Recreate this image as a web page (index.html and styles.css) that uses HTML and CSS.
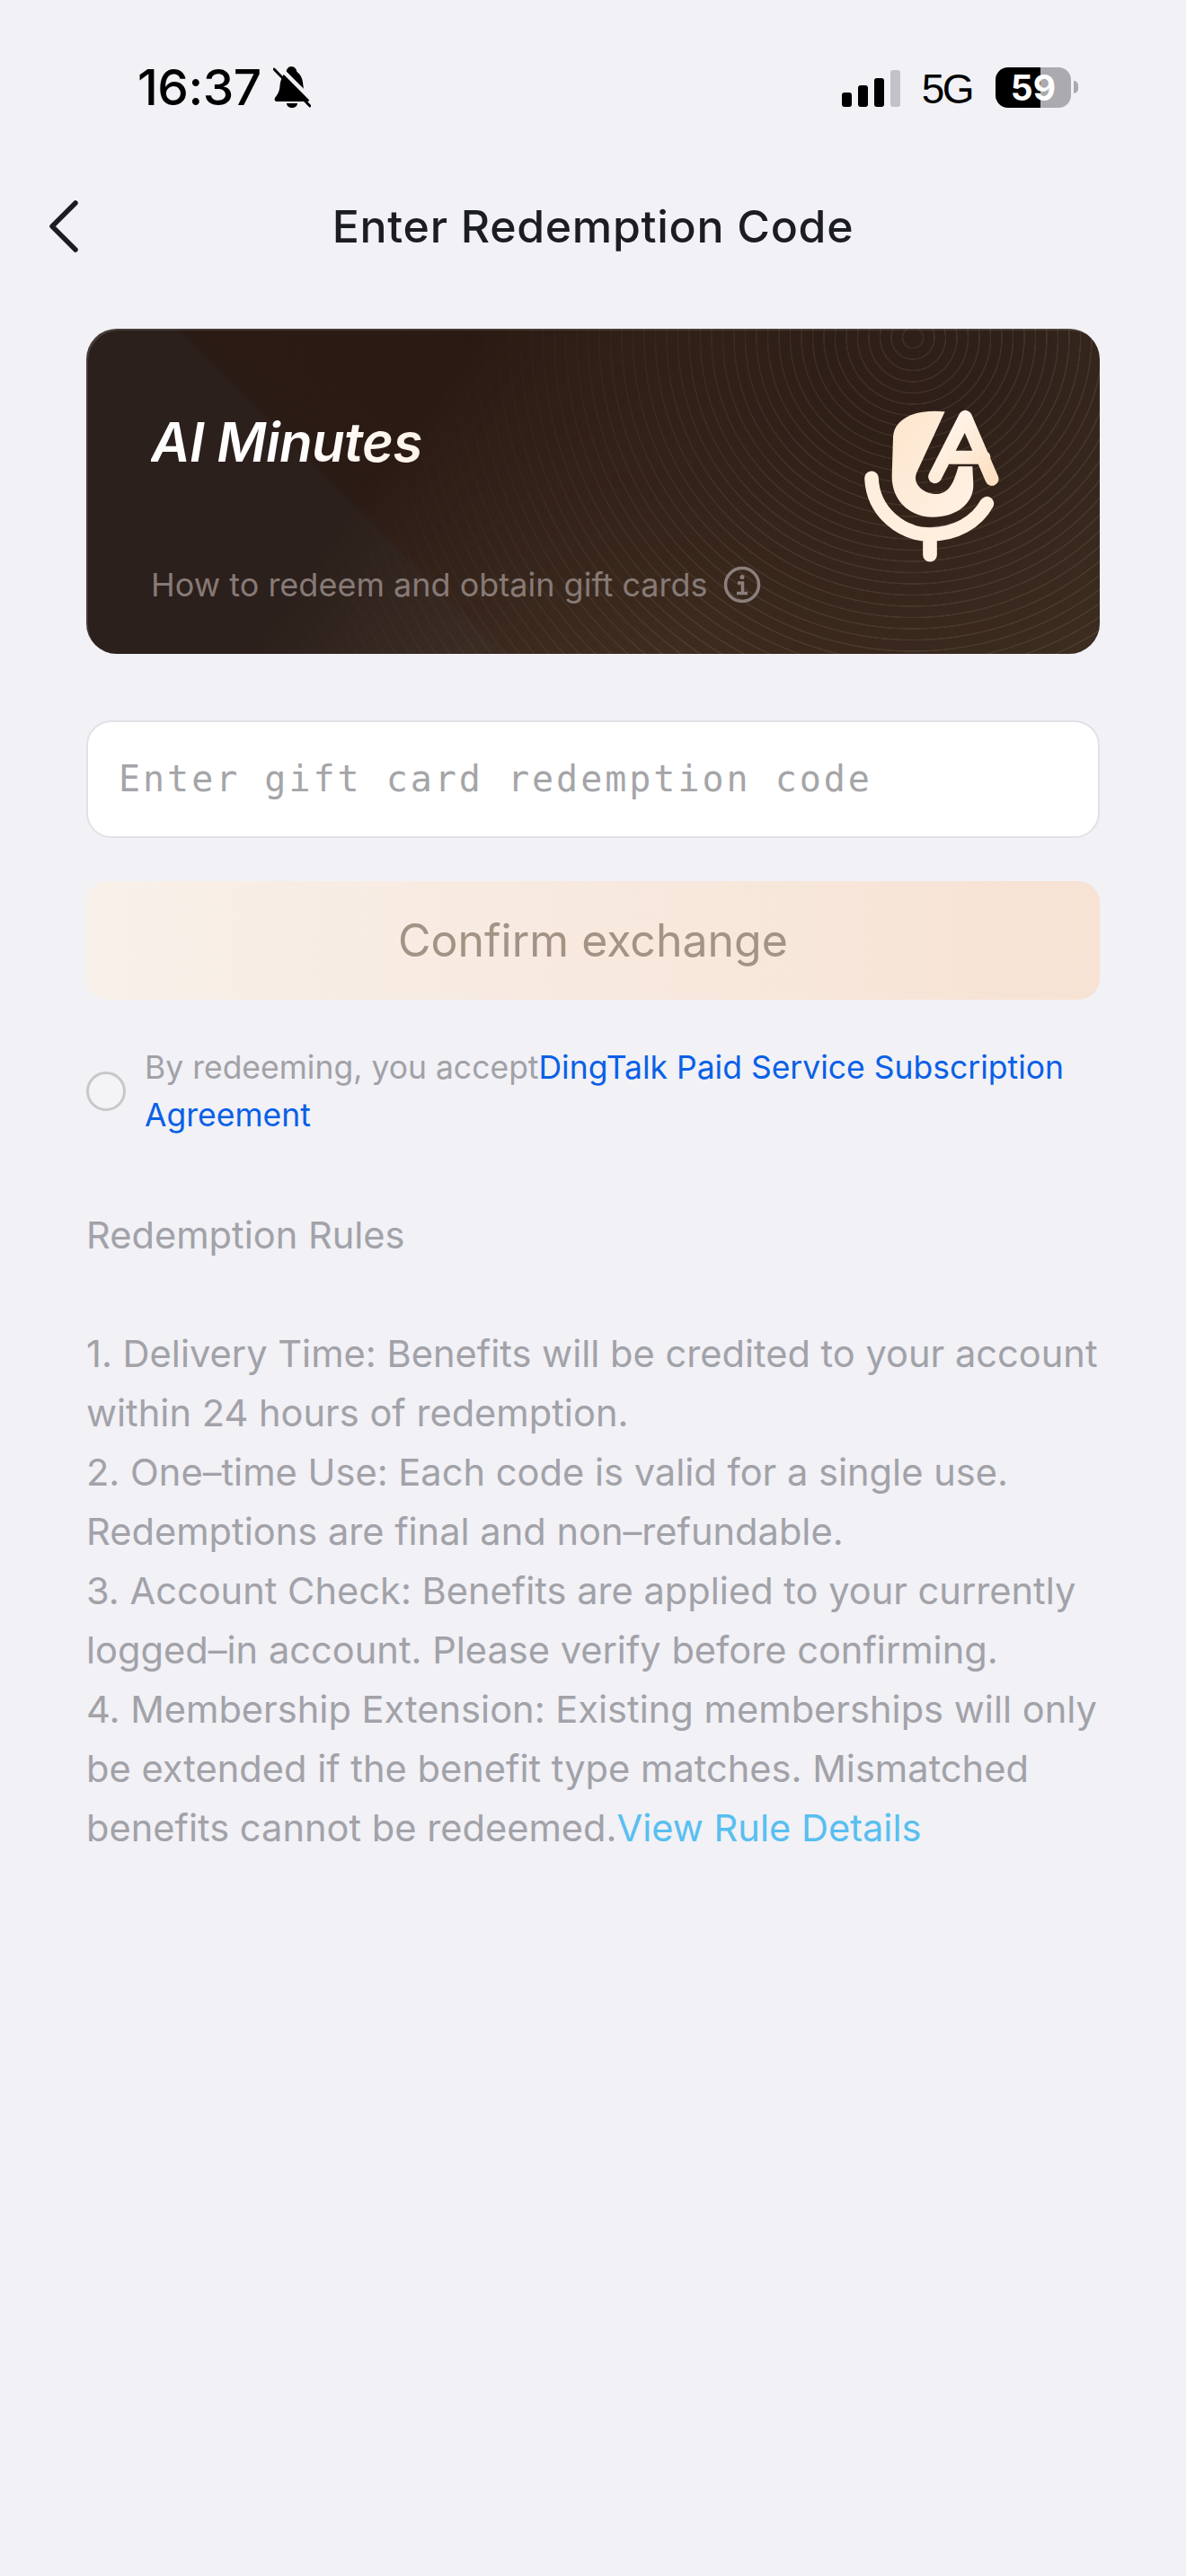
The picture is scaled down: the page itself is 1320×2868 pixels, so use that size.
FILE: index.html
```html
<!DOCTYPE html>
<html lang="en">
<head>
<meta charset="utf-8">
<title>Enter Redemption Code</title>
<meta name="viewport" content="width=device-width, initial-scale=1">
<link rel="stylesheet" href="styles.css">
</head>
<body>

<div class="status">
  <div class="status-left">
    <span class="time">16:37</span>
    <svg class="bell" viewBox="0 0 42 46" width="42" height="46">
      <path d="M20 0C24 0 26 3 26.500 6C32 10 33 16 33.500 22C34 28 37 31 40 35C41 37 40 39 38 39H4C2 39 1 37 2 35C5 31 7 28 7.500 22C8 16 10 10 14.500 6C15 3 17 0 20 0Z" fill="#000"/>
      <path d="M15 41H27C27 44 24 46 21 46C18 46 15 44 15 41Z" fill="#000"/>
      <path d="M6 0L47 41" stroke="#f1f1f6" stroke-width="4.500"/>
      <path d="M1 3L41 44" stroke="#000" stroke-width="3" stroke-linecap="round"/>
    </svg>
  </div>
  <div class="status-right">
    <div class="signal">
      <span class="bar b1"></span>
      <span class="bar b2"></span>
      <span class="bar b3"></span>
      <span class="bar b4"></span>
    </div>
    <span class="net">5G</span>
    <div class="battery">
      <span class="level">59</span>
      <span class="nub"></span>
    </div>
  </div>
</div>

<div class="nav">
  <svg class="back" viewBox="0 0 36 60" width="36" height="60">
    <path d="M31 4L5 30L31 56" fill="none" stroke="#1c1d22" stroke-width="5.500" stroke-linecap="round" stroke-linejoin="round"/>
  </svg>
  <h1>Enter Redemption Code</h1>
</div>

<div class="main">

  <div class="card">
    <div class="card-text">
      <div class="card-title">AI Minutes</div>
      <div class="card-link">
        How to redeem and obtain gift cards
        <svg class="info" viewBox="0 0 42 42" width="42" height="42">
          <circle cx="21" cy="21" r="18.500" fill="none" stroke="#8b7f7c" stroke-width="3.500"/>
          <circle cx="21" cy="12.500" r="2.500" fill="#8b7f7c"/>
          <path d="M16 19H21.500V30M15 30.500H27" fill="none" stroke="#8b7f7c" stroke-width="3.500"/>
        </svg>
      </div>
    </div>
    <svg class="logo" viewBox="0 0 660 600" width="220" height="200">
      <defs>
        <linearGradient id="mic" x1="0" y1="0" x2="1" y2="1">
          <stop offset="0" stop-color="#fde6ce"/>
          <stop offset="1" stop-color="#fff1e4"/>
        </linearGradient>
        <linearGradient id="aa" x1="0" y1="0" x2="1" y2="1">
          <stop offset="0" stop-color="#fff8f2"/>
          <stop offset="1" stop-color="#fde0c2"/>
        </linearGradient>
      </defs>
      <path d="M395 85L300 290C285 330 330 362 370 360C410 358 425 320 440 268H487L490 330C490 395 430 437 355 437C280 437 218 385 218 300L222 170C225 110 290 75 395 85Z" fill="url(#mic)"/>
      <path d="M150 307C155 420 250 495 345 495C430 495 500 455 535 392M345 495V563" fill="none" stroke="#fdeede" stroke-width="47" stroke-linecap="round"/>
      <path d="M362 302L463 103L552 310M405 238H525" fill="none" stroke="url(#aa)" stroke-width="45" stroke-linecap="round" stroke-linejoin="round"/>
    </svg>
  </div>

  <div class="code-input">Enter gift card redemption code</div>

  <div class="confirm">Confirm exchange</div>

  <div class="agree">
    <span class="radio"></span>
    <p>By redeeming, you accept<a href="#">DingTalk Paid Service Subscription Agreement</a></p>
  </div>

  <div class="rules">
    <p class="rules-head">Redemption Rules</p>
    <p>1. Delivery Time: Benefits will be credited to your account within 24 hours of redemption.</p>
    <p>2. One–time Use: Each code is valid for a single use. Redemptions are final and non–refundable.</p>
    <p>3. Account Check: Benefits are applied to your currently logged–in account. Please verify before confirming.</p>
    <p>4. Membership Extension: Existing memberships will only be extended if the benefit type matches. Mismatched benefits cannot be redeemed.<a href="#">View Rule Details</a></p>
  </div>

</div>

</body>
</html>
```
FILE: styles.css
```css
html, body { margin: 0; padding: 0; }
body { background: #f1f1f6; font-family: Inter, "Liberation Sans", sans-serif; color: #1c1d22; min-height: 2868px; }
a { text-decoration: none; }
p { margin: 0; }

/* status bar */
.status { display: flex; justify-content: space-between; align-items: center; height: 50px; padding: 72px 120px 0 153px; }
.status-left { display: flex; align-items: center; gap: 13px; }
.time { font-size: 55px; font-weight: 500; letter-spacing: -0.5px; color: #000; line-height: 50px; }
.bell { display: block; }
.status-right { display: flex; align-items: center; }
.signal { display: flex; align-items: flex-end; gap: 7px; height: 41px; margin-top: 2px; }
.bar { display: block; width: 11px; background: #000; border-radius: 3px; }
.b1 { height: 16px; }
.b2 { height: 24px; }
.b3 { height: 32px; }
.b4 { height: 41px; background: #c2c2c8; }
.net { font-family: "Liberation Sans", sans-serif; font-size: 46px; letter-spacing: -2.500px; color: #000; margin: 3px 26px 0 24px; line-height: 46px; }
.battery { display: flex; align-items: center; }
.level { display: block; width: 84px; height: 45px; line-height: 45px; text-align: center; font-size: 39px; font-weight: 700; color: #fff; border-radius: 14px;
         background: linear-gradient(to right, #000 50px, #aaaab0 50px); }
.nub { display: block; width: 5px; height: 14px; margin-left: 3px; background: #aaaab0; border-radius: 0 5px 5px 0; }

/* title row */
.nav { display: grid; grid-template-columns: 1fr auto 1fr; align-items: center; height: 112px; margin-top: 74px; }
.back { display: block; margin-left: 53px; }
.nav h1 { margin: 0; font-size: 50px; font-weight: 500; letter-spacing: 0.700px; color: #1c1d22; }

.main { padding: 58px 96px 0; }

/* gift card banner */
.card { position: relative; overflow: hidden; display: flex; justify-content: space-between; height: 362px; padding: 0 84px 0 72px; box-sizing: border-box; border-radius: 34px;
        background: linear-gradient(45deg, #2c201c 324px, #2b1b15 332px, #2a1a13 560px, #2d2019 100%); box-shadow: inset 2px 2px 0 rgba(255,255,255,.13); }
.card::before { content: ""; position: absolute; inset: 0;
        background: repeating-radial-gradient(circle at 920px 10px, transparent 0, transparent 10.500px, rgba(255,240,220,.08) 11px, rgba(255,240,220,.08) 12px, transparent 12.500px),
                    radial-gradient(circle at 920px 10px, rgba(110,88,62,.04) 100px, rgba(125,100,70,.4) 680px);
        -webkit-mask-image: linear-gradient(125deg, transparent 31%, #000 66%);
        mask-image: linear-gradient(125deg, transparent 31%, #000 66%); }
.card-text { position: relative; display: flex; flex-direction: column; justify-content: space-between; padding: 96px 0 55px; }
.card-title { font-size: 60px; line-height: 60px; font-style: italic; font-weight: 600; letter-spacing: -0.700px;
        background: linear-gradient(90deg, #fff 0, #fff 22%, #fbd3ae 100%); -webkit-background-clip: text; background-clip: text; color: transparent; }
.card-link { display: flex; align-items: center; gap: 17px; font-size: 36px; line-height: 44px; color: #877a76; }
.logo { position: relative; display: block; margin-top: 64px; }

/* input and button */
.code-input { height: 131px; box-sizing: border-box; margin-top: 74px; padding-left: 34px; border: 2px solid #e2e2e6; border-radius: 28px; background: #fff;
        font-family: "DejaVu Sans Mono", monospace; font-size: 40px; letter-spacing: 2.980px; line-height: 127px; color: #a5a5a8; }
.confirm { height: 132px; margin-top: 48px; border-radius: 24px; background: linear-gradient(90deg, #f8f0e9, #f7e2d4);
        font-size: 50px; line-height: 132px; text-align: center; color: #a39385; }

/* agreement */
.agree { display: flex; align-items: center; gap: 21px; margin-top: 49px; }
.radio { flex: none; width: 38px; height: 38px; border: 3px solid #c8c8cb; border-radius: 50%; background: #f4f4f7; }
.agree p { font-size: 35.500px; line-height: 53px; color: #a1a1a6; }
.agree a { color: #0a60e6; }

/* rules */
.rules { margin-top: 74px; font-size: 41.600px; line-height: 66px; color: #a2a2a8; }
.rules-head { margin-bottom: 66px; }
.rules a { color: #58bff0; }
```
